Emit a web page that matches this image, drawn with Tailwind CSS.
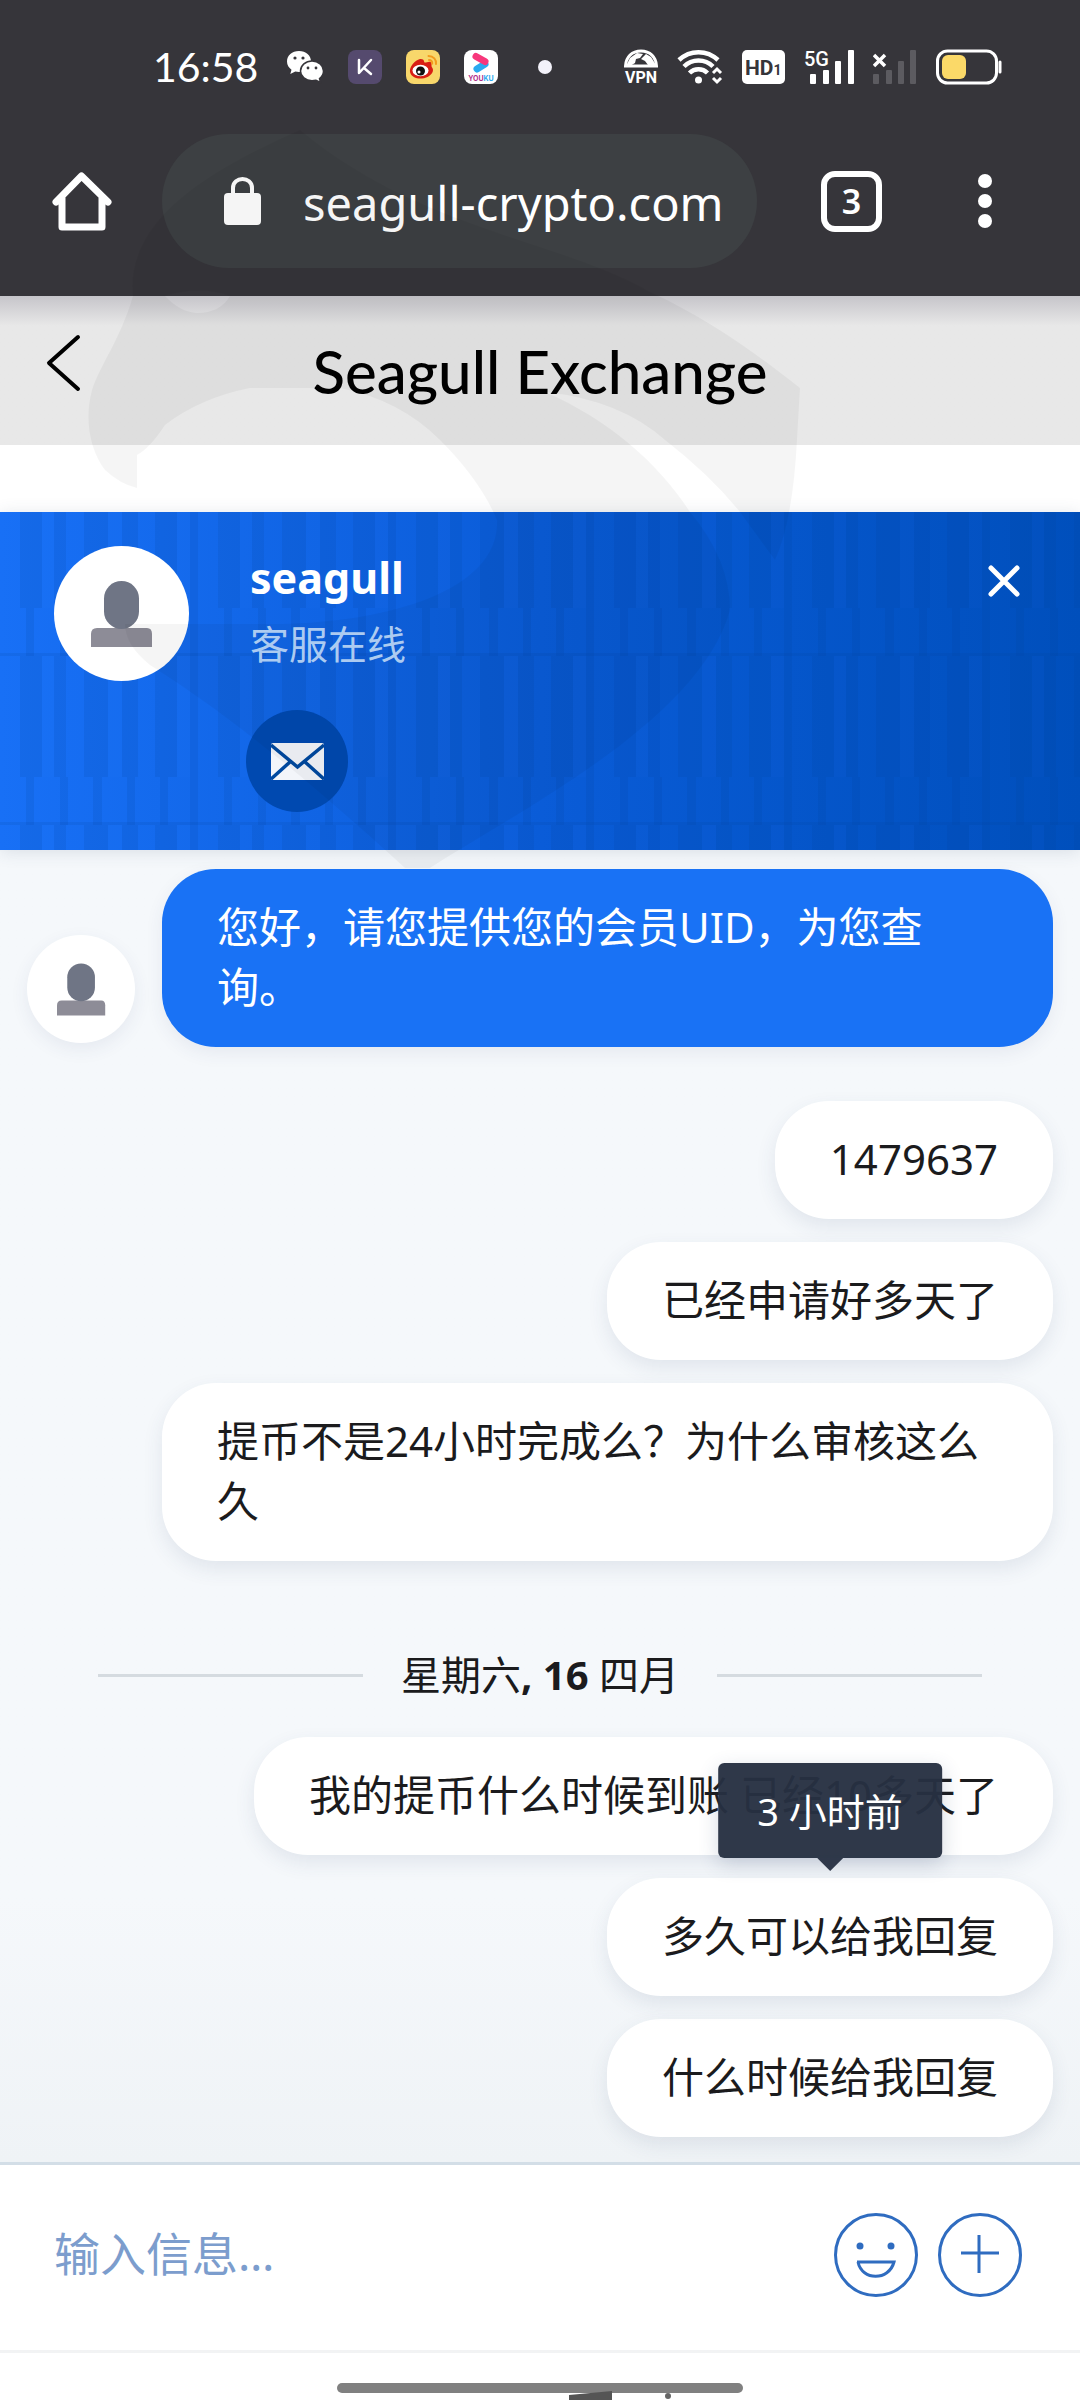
<!DOCTYPE html>
<html lang="zh-CN">
<head>
<meta charset="utf-8">
<meta name="viewport" content="width=device-width, initial-scale=1">
<title>Seagull Exchange</title>
<script src="https://cdn.jsdelivr.net/npm/@tailwindcss/browser@4"></script>
</head>
<body class="relative flex min-h-screen flex-col overflow-x-hidden bg-white font-['Noto_Sans','Noto_Sans_CJK_SC',sans-serif] text-[42px] leading-[60px] text-[#1b1b1d]">

<!-- Phone status bar and browser toolbar -->
<header class="bg-[#36353a]">
  <div class="flex h-[134px] items-center justify-between pr-[78px] pl-[153px]">
    <div class="flex items-center gap-6">
      <time class="mr-1 font-[Lato,sans-serif] text-[41px] text-white">16:58</time>
      <svg class="h-[34px] w-[38px]" viewBox="0 0 38 34" role="img" aria-label="WeChat">
        <path fill="#fff" d="M13 1C6 1 1 5.500 1 11.500c0 3.500 1.800 6.300 4.500 8.200L4.300 24l5-2.400c1.200.3 2.400.4 3.700.4C20 22 25 17.500 25 11.500S20 1 13 1z"/>
        <path fill="#fff" stroke="#36353a" stroke-width="1.500" d="M26 11c6.300 0 11.500 4.300 11.500 10 0 3.200-1.600 5.700-4 7.500l1 4-4.500-2.300c-1.300.3-2.600.5-4 .5-6.300 0-11.500-4.200-11.500-9.700S19.700 11 26 11z"/>
        <g fill="#36353a"><circle cx="9" cy="8" r="1.600"/><circle cx="17" cy="8" r="1.600"/><circle cx="22" cy="18" r="1.400"/><circle cx="30" cy="18" r="1.400"/></g>
      </svg>
      <svg class="h-[34px] w-[34px]" viewBox="0 0 34 34" role="img" aria-label="K">
        <rect width="34" height="34" rx="8" fill="#554a6e"/>
        <path fill="none" stroke="#fff" stroke-width="2.500" stroke-linecap="round" stroke-linejoin="round" d="M11 10v13l12-13M16 18l7 6"/>
      </svg>
      <svg class="h-[34px] w-[34px]" viewBox="0 0 34 34" role="img" aria-label="Weibo">
        <rect width="34" height="34" rx="8" fill="#f8d76b"/>
        <path fill="#d81e14" d="M14 9c-5 1-11 8-10 13 1 5 7 7 12 6.500C22 28 27 24 27 20c0-2-1.500-2.500-1.500-4s.5-3-1-4-4 .5-5.500.5 0-4-5-3.500z"/>
        <ellipse cx="14.500" cy="20.500" rx="8" ry="5.800" fill="#fff"/><circle cx="14.500" cy="21" r="4.500" fill="#111"/><circle cx="13" cy="22" r="1.500" fill="#fff"/>
        <path fill="none" stroke="#f39b1d" stroke-width="2" stroke-linecap="round" d="M22.500 6c5 0 8 3.500 7.500 8M23 10c2 0 3.500 1.500 3.200 3.500"/>
      </svg>
      <svg class="h-[34px] w-[34px]" viewBox="0 0 34 34" role="img" aria-label="Youku">
        <rect width="34" height="34" rx="8" fill="#fff"/>
        <path stroke="#2aa9ef" stroke-width="7" stroke-linecap="round" d="M13 19l8-5"/>
        <path stroke="#f7377b" stroke-width="7" stroke-linecap="round" d="M12 6.500l9 5"/>
        <text x="17" y="31" text-anchor="middle" font-family="Inter, sans-serif" font-weight="700" font-size="7" fill="#b0308a">YOU<tspan fill="#2aa9ef">KU</tspan></text>
      </svg>
      <span class="ml-4 size-[14px] rounded-full bg-[#f3f2fa]"></span>
    </div>
    <div class="flex items-center gap-[19px] text-white">
      <svg class="h-[36px] w-[34px]" viewBox="0 0 34 36" role="img" aria-label="VPN">
        <path fill="none" stroke="#fff" stroke-width="3" d="M1.500 17C2 8 8 2 17 2s15 6 15.500 15z"/>
        <path fill="#fff" d="M6 9l7-5 6 1-3 4-4 1-1 4-5 3H2zM17 10l5-5 5 3 5 8h-8l-3-4z"/>
        <text x="17" y="34" text-anchor="middle" font-family="Roboto, sans-serif" font-weight="700" font-size="16" fill="#fff">VPN</text>
      </svg>
      <svg class="h-[36px] w-[46px]" viewBox="0 0 46 36" role="img" aria-label="Wi-Fi">
        <g fill="none" stroke="#fff" stroke-width="4.500"><path d="M2 11C13 .5 30 .5 41 11"/><path d="M7 17.500c8-8 21-8 29 0"/><path d="M12.500 24c5-5 13-5 18 0"/></g>
        <circle cx="21.500" cy="31" r="3.500" fill="#fff"/>
        <path fill="none" stroke="#fff" stroke-width="3" d="M36 24l4-4 4 4M36 29l4 4 4-4"/>
      </svg>
      <svg class="h-[34px] w-[43px]" viewBox="0 0 43 34" role="img" aria-label="HD1">
        <rect width="43" height="34" rx="5" fill="#fff"/>
        <text x="3" y="25" font-family="Roboto, sans-serif" font-weight="700" font-size="21" fill="#36353a">HD<tspan font-size="14">1</tspan></text>
      </svg>
      <svg class="h-[36px] w-[50px]" viewBox="0 0 50 36" role="img" aria-label="5G">
        <text x="0" y="17" font-family="Roboto, sans-serif" font-weight="500" font-size="20" fill="#fff">5G</text>
        <g fill="#fff"><rect x="6" y="25" width="6" height="10" rx="1"/><rect x="19" y="21" width="6" height="14" rx="1"/><rect x="31" y="12" width="6" height="23" rx="1"/><rect x="44" y="1" width="6" height="34" rx="1"/></g>
      </svg>
      <svg class="h-[36px] w-[44px]" viewBox="0 0 44 36" role="img" aria-label="No signal">
        <g fill="#5c5b60"><rect x="0" y="25" width="6" height="10" rx="1"/><rect x="13" y="21" width="6" height="14" rx="1"/><rect x="25" y="12" width="6" height="23" rx="1"/><rect x="37" y="1" width="6" height="34" rx="1"/></g>
        <path stroke="#fff" stroke-width="3.500" d="M1 6l11 11M12 6L1 17"/>
      </svg>
      <svg class="h-[36px] w-[66px]" viewBox="0 0 66 36" role="img" aria-label="Battery">
        <rect x="1.500" y="2" width="59" height="32" rx="10" fill="none" stroke="#fff" stroke-width="3"/>
        <rect x="6" y="6" width="24" height="24" rx="6" fill="#fbd968"/><path stroke="#fff" stroke-width="3" stroke-linecap="round" d="M64 13v10"/>
      </svg>
    </div>
  </div>
  <div class="flex items-center pr-[88px] pb-7 pl-[52px]">
    <button type="button" aria-label="Home" class="mr-[50px]">
      <svg class="h-[64px] w-[60px]" viewBox="0 0 60 64" fill="none" stroke="#fff" stroke-width="7" stroke-linecap="round" stroke-linejoin="round"><path d="M4 33L29.500 7 56 33M10 29v29h40V29"/></svg>
    </button>
    <div class="flex h-[134px] min-w-0 flex-1 items-center rounded-full bg-[#3d4043] pl-[62px]">
      <svg class="mr-[42px] h-[48px] w-[37px] shrink-0" viewBox="0 0 37 48" aria-hidden="true"><rect y="16" width="37" height="32" rx="4" fill="#fff"/><path fill="none" stroke="#fff" stroke-width="4" d="M9 18v-7c0-12 19-12 19 0v7"/></svg>
      <input type="text" aria-label="Address" value="seagull-crypto.com" class="w-full min-w-0 bg-transparent pt-1 text-[47px] text-white outline-none">
    </div>
    <button type="button" aria-label="Tabs" class="mr-[96px] ml-[64px] flex size-[61px] items-center justify-center rounded-[14px] border-[6px] border-white text-[34px] leading-none font-semibold text-white">3</button>
    <button type="button" aria-label="Menu" class="flex flex-col gap-[6px]">
      <span class="size-[14px] rounded-full bg-white"></span><span class="size-[14px] rounded-full bg-white"></span><span class="size-[14px] rounded-full bg-white"></span>
    </button>
  </div>
</header>

<div class="mb-[67px] grid h-[149px] grid-cols-[96px_1fr_96px] items-center bg-linear-to-b from-[#c6c5ca] via-[#e8e8e8] via-20% to-[#e8e8e8]">
  <button type="button" aria-label="Back" class="mb-4 justify-self-end pr-[14px]">
    <svg class="h-[58px] w-[36px]" viewBox="0 0 36 58" fill="none" stroke="#000" stroke-width="4" stroke-linecap="round" stroke-linejoin="round"><path d="M32 3L3 29l29 26"/></svg>
  </button>
  <h1 class="text-center font-[Lato,sans-serif] text-[60px] font-medium text-black">Seagull Exchange</h1>
</div>

<!-- Operator panel -->
<section class="relative z-10 overflow-hidden bg-linear-to-r from-[#1870f6] via-[#0a5cd8] via-50% to-[#004fbc] shadow-[0_2px_16px_rgba(60,80,110,0.15)]">
  <svg class="absolute inset-0 h-full w-full" aria-hidden="true">
    <defs>
      <pattern id="slats" width="198" height="169" y="-25" patternUnits="userSpaceOnUse">
        <g fill="#003a90" fill-opacity=".13">
          <rect x="20" width="22" height="121"/><rect x="54" width="12" height="121"/><rect x="84" width="24" height="121"/><rect x="122" width="16" height="121"/><rect x="155" width="22" height="121"/><rect x="190" width="8" height="121"/>
          <rect x="26" y="121" width="8" height="48"/><rect x="60" y="121" width="8" height="48"/><rect x="93" y="121" width="9" height="48"/><rect x="127" y="121" width="8" height="48"/><rect x="160" y="121" width="8" height="48"/><rect x="190" y="121" width="8" height="48"/>
          <rect y="166" width="198" height="3"/>
        </g>
        <g fill="#3d8bff" fill-opacity=".03"><rect x="42" width="12" height="121"/><rect x="108" width="14" height="121"/><rect x="177" width="13" height="121"/></g>
      </pattern>
    </defs>
    <rect width="100%" height="100%" fill="url(#slats)"/>
  </svg>
  <div class="relative flex items-start pt-[34px] pr-[60px] pb-[38px] pl-[54px]">
    <span class="mr-[61px] flex size-[135px] items-center justify-center rounded-full bg-white">
      <svg class="h-[66px] w-[62px]" viewBox="0 0 62 66" aria-hidden="true"><path fill="#8d8c97" d="M0 66V53q0-6 6-6h50q5 0 5 6v13z"/><rect x="13" width="35" height="48" rx="17.500" fill="#6f7585"/></svg>
    </span>
    <div class="flex-1">
      <p class="text-[43px] leading-[64px] font-bold text-white">seagull</p>
      <p class="text-[39px] leading-[68px] text-[#b4d4fb]">客服在线</p>
      <button type="button" aria-label="Email" class="mt-[32px] -ml-1 flex size-[102px] items-center justify-center rounded-full bg-[#0049b0]">
        <svg class="h-[37px] w-[53px]" viewBox="0 0 53 37" aria-hidden="true"><rect width="53" height="37" rx="2" fill="#f3f5fa"/><path fill="none" stroke="#0049a0" stroke-width="3.500" d="M0 2l26.500 22L53 2M0 36l19-17M53 36L34 19"/></svg>
      </button>
    </div>
    <button type="button" aria-label="Close" class="mt-[19px]">
      <svg class="size-[32px]" viewBox="0 0 32 32" stroke="#fff" stroke-width="5" stroke-linecap="round"><path d="M3 3l26 26M29 3L3 29"/></svg>
    </button>
  </div>
</section>

<!-- Conversation -->
<main class="flex flex-1 flex-col items-end gap-[23px] bg-linear-to-b from-[#f5f8fb] via-[#f5f8fb] via-80% to-[#eff3f6] px-[27px] pt-[19px] pb-[24px]">
  <div class="mb-[31px] flex w-full items-end gap-[27px]">
    <span class="mb-[4px] flex size-[108px] shrink-0 items-center justify-center rounded-full bg-white shadow-[0_6px_18px_rgba(50,70,110,0.08)]">
      <svg class="h-[53px] w-[49px]" viewBox="0 0 62 66" aria-hidden="true"><path fill="#8d8c97" d="M0 66V53q0-6 6-6h50q5 0 5 6v13z"/><rect x="13" width="35" height="48" rx="17.500" fill="#6f7585"/></svg>
    </span>
    <p class="flex-1 rounded-[54px] bg-[#1972f5] px-[55px] pt-[28px] pb-[30px] text-white shadow-[0_6px_18px_rgba(50,70,110,0.08)]">您好，请您提供您的会员UID，为您查询。</p>
  </div>
  <p class="ml-[135px] rounded-[54px] bg-white px-[55px] pt-[28px] pb-[30px] shadow-[0_8px_20px_rgba(50,70,110,0.1)]">1479637</p>
  <p class="ml-[135px] rounded-[54px] bg-white px-[55px] pt-[28px] pb-[30px] shadow-[0_8px_20px_rgba(50,70,110,0.1)]">已经申请好多天了</p>
  <p class="ml-[135px] rounded-[54px] bg-white px-[55px] pt-[28px] pb-[30px] shadow-[0_8px_20px_rgba(50,70,110,0.1)]">提币不是24小时完成么？为什么审核这么久</p>
  <div class="mt-[61px] mb-[9px] flex w-full items-center gap-[38px] px-[71px] text-[40px] before:h-[3px] before:flex-1 before:bg-[#d5dbe0] after:h-[3px] after:flex-1 after:bg-[#d5dbe0]">
    <span>星期六<b>, 16</b> 四月</span>
  </div>
  <p class="ml-[135px] rounded-[54px] bg-white px-[55px] pt-[28px] pb-[30px] shadow-[0_8px_20px_rgba(50,70,110,0.1)]">我的提币什么时候到账 已经10多天了</p>
  <div class="relative ml-[135px]">
    <p class="rounded-[54px] bg-white px-[55px] pt-[28px] pb-[30px] shadow-[0_8px_20px_rgba(50,70,110,0.1)]">多久可以给我回复</p>
    <div role="tooltip" class="absolute bottom-full left-1/2 mb-[20px] -translate-x-1/2 rounded-[6px] bg-[#263042]/96 px-[39px] pt-[18px] pb-[17px] text-[38px] whitespace-nowrap text-white shadow-[0_6px_20px_rgba(50,70,110,0.2)]">3 小时前
      <svg class="absolute top-full left-1/2 h-[13px] w-[26px] -translate-x-1/2" viewBox="0 0 26 13" aria-hidden="true"><path fill="#2f384a" d="M0 0h26L13 13z"/></svg>
    </div>
  </div>
  <p class="ml-[135px] rounded-[54px] bg-white px-[55px] pt-[28px] pb-[30px] shadow-[0_8px_20px_rgba(50,70,110,0.1)]">什么时候给我回复</p>
</main>

<!-- Message composer -->
<form class="relative flex h-[191px] items-center gap-[20px] border-t-[3px] border-b-[3px] border-t-[#d3dee7] border-b-[#f2f3f4] bg-white pr-[58px] pb-[6px] pl-[54px]">
  <input type="text" aria-label="输入信息" placeholder="输入信息…" class="mb-1 min-w-0 flex-1 bg-transparent text-[46px] leading-[64px] outline-none placeholder:text-[#7c9dcd]">
  <button type="button" aria-label="Emoji">
    <svg class="h-[86px] w-[84px]" viewBox="0 0 84 86" fill="none" stroke="#2f6cc0" stroke-width="3"><circle cx="42" cy="43" r="40.500"/><path d="M23 50h37c-5 19-32 19-36 0"/><g fill="#2f6cc0" stroke="none"><circle cx="26" cy="34" r="3.500"/><circle cx="57" cy="34" r="3.500"/></g></svg>
  </button>
  <button type="button" aria-label="Attach">
    <svg class="h-[86px] w-[84px]" viewBox="0 0 84 86" fill="none" stroke="#2f6cc0" stroke-width="3"><circle cx="42" cy="43" r="40.500"/><path d="M23 41h38M41 23v38"/></svg>
  </button>
</form>
<footer class="relative flex h-[47px] items-end justify-center overflow-hidden bg-white">
  <svg class="h-[18px] w-[406px]" viewBox="0 0 406 18" aria-hidden="true">
    <rect y="1" width="406" height="10" rx="5" fill="#808080"/><path fill="#555" d="M232 13l43-4v9h-43z"/><circle cx="331" cy="14" r="3" fill="#666"/>
  </svg>
</footer>

<!-- Bird emblem tinted over the page -->
<svg class="pointer-events-none absolute top-0 left-1/2 z-20 h-[900px] w-[1080px] -translate-x-1/2" viewBox="0 0 1080 900" fill="#000" fill-opacity=".04" fill-rule="evenodd" aria-hidden="true">
  <path d="M300 130C210 170 125 220 133 296C120 340 100 365 92 390C84 420 90 450 105 470Q120 484 137 488V455Q150 448 165 425Q200 398 250 388H340Q400 400 440 440Q480 480 497 520C500 590 390 622 280 624H125Q125 645 150 665C230 715 320 790 405 868H430C520 810 700 720 730 610Q730 560 690 512C660 465 610 420 545 392Q620 400 665 440Q710 475 740 512L775 560Q793 520 797 440L800 388C740 340 690 310 650 292C560 240 420 230 300 130zM165 296Q180 312 197 313Q220 313 230 296Q200 285 165 296z"/>
</svg>
</body>
</html>
